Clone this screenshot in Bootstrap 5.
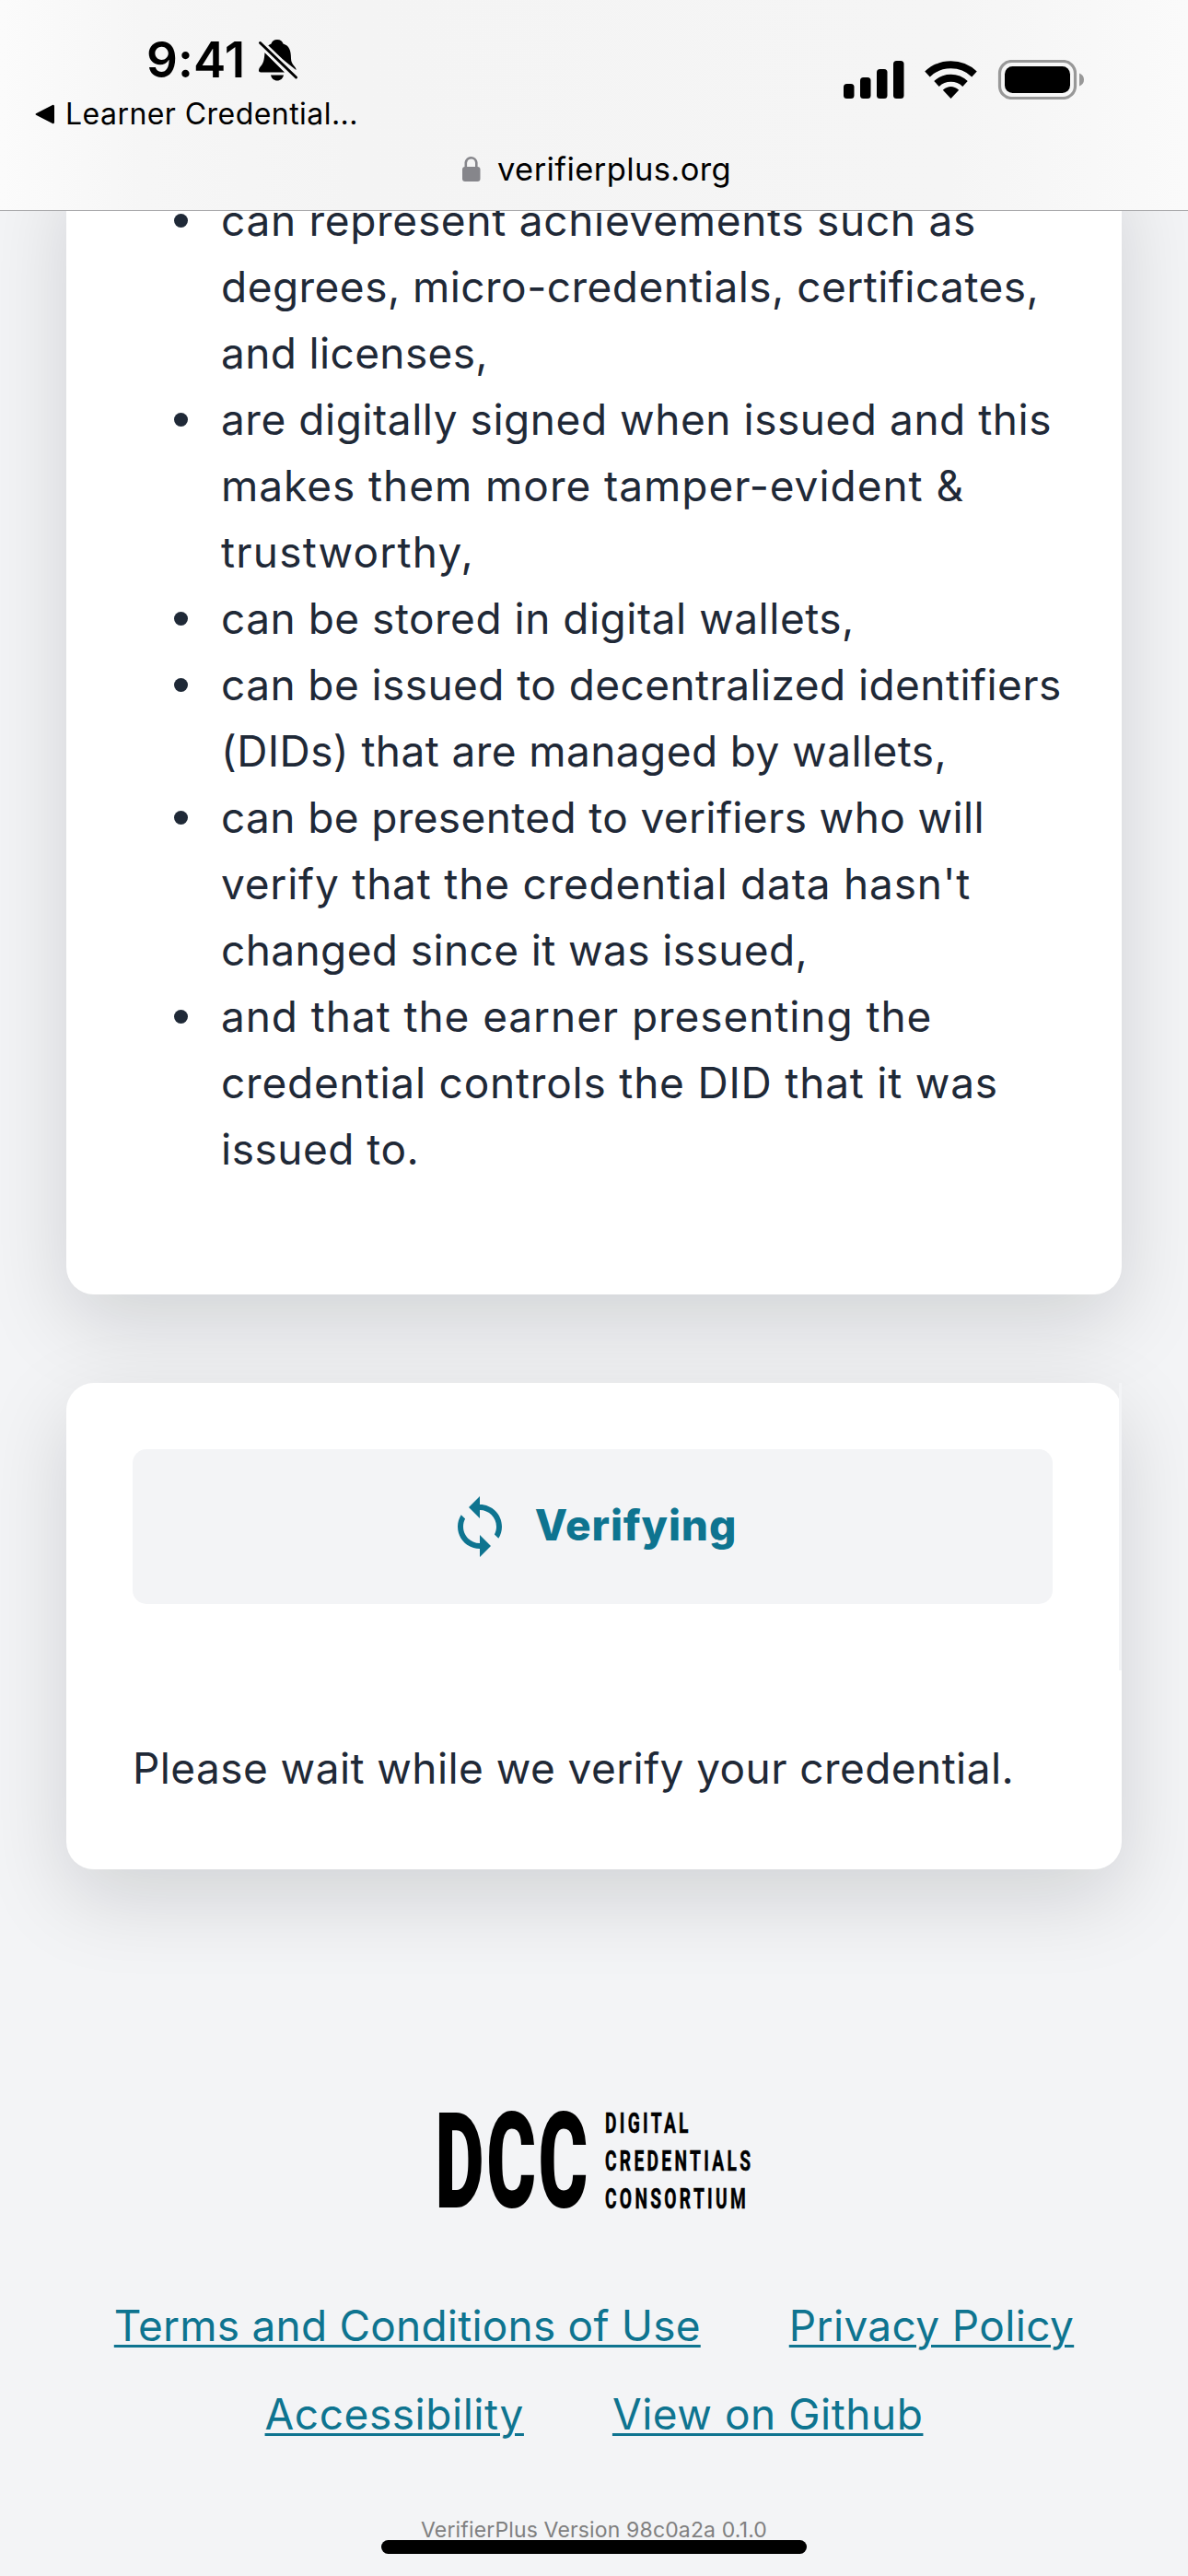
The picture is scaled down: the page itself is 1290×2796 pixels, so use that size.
<!DOCTYPE html>
<html lang="en">
<head>
<meta charset="utf-8">
<meta name="viewport" content="width=device-width, initial-scale=1">
<title>VerifierPlus</title>
<link href="https://cdn.jsdelivr.net/npm/bootstrap@5.3.0/dist/css/bootstrap.min.css" rel="stylesheet">
<style>
html,body{height:2796px;overflow:hidden}
body{background:#f3f4f6;color:#1f2937;font-family:Inter,sans-serif;font-size:46px;line-height:72px;width:1290px}
svg{display:block;flex:none}
.phone-top{height:229px;padding-top:35px;border-bottom:1.5px solid #a9a9ab;background:linear-gradient(90deg,#fbfbfb 0,#f6f6f6 12%,#f4f4f4 30%,#f5f5f5 80%,#fafafa 100%);font-family:Inter,sans-serif;color:#000;z-index:2}
.clock-row{height:60px;padding-left:159px;line-height:60px;font-size:53px;font-weight:600}
.clock-text{width:107px;letter-spacing:.1px}
.back-row{height:40px;margin-top:9px;padding-left:38px;font-size:32px;line-height:40px;letter-spacing:.45px}
.back-row svg{margin-right:11px}
.status-icons{padding:30px 113px 0 0}
.url-row{margin-top:18px;height:44px;line-height:44px;font-size:34.5px;letter-spacing:.4px;padding-left:502px}
.url-row svg{margin-top:-1px}
.page-area{height:2567px;overflow:hidden}
.panel{width:1146px;margin:0 auto;background:#fff;border-radius:30px;box-shadow:0 30px 90px rgba(8,12,24,.145)}
.panel-facts{margin-top:-60px;height:1236px;padding:33.5px 0 0 117px}
.fact{white-space:nowrap}
.dot{width:15px;height:15px;border-radius:50%;background:#1f2937;flex:none;margin:29.5px 36px 0 0}
.fact span{display:block;letter-spacing:var(--track)}
.panel-status{margin-top:96px;height:528px;padding:72px}
.panel-status::after{content:"";position:absolute;top:0;right:0;width:3px;height:312px;background:#f3f4f6}
.verify-box{width:999px;height:168px;border-radius:15px;background:#f3f4f6;color:#0e7490;font:800 46px/72px Inter,sans-serif;letter-spacing:.9px;gap:24px;padding-right:2px}
.verify-box span{padding-bottom:4px}
.wait-text{margin:141.5px 0 0;letter-spacing:.42px;white-space:nowrap}
.dcc-logo{margin:254px 0 0 470px;overflow:visible}
.footer-links{margin-top:85px;gap:24px 96px}
.footer-links a{color:#0e7490;text-decoration:underline;text-decoration-thickness:3px;text-underline-offset:4px;white-space:nowrap;margin-top:-1px;margin-bottom:1px}
.version{color:#808080;font-size:23px;line-height:36px;letter-spacing:.15px;margin-top:71px}
.home-bar{left:414px;top:2757px;width:462px;height:15px;border-radius:8px;background:#000;z-index:3}
</style>
<script src="https://cdn.jsdelivr.net/npm/bootstrap@5.3.0/dist/js/bootstrap.bundle.min.js"></script>
</head>
<body class="position-relative m-0">
<header class="phone-top position-relative">
  <div class="d-flex justify-content-between">
    <div>
      <div class="clock-row d-flex">
        <div class="clock-text">9:41</div>
        <svg width="58" height="60" viewBox="266 35 58 60">
          <path d="M301 43c-3.5 0-5.800 2-6.500 4.500-2 .8-3.700 1.900-5 3.300L321.500 76c.8-3-5.500-5.500-5.500-12.500 0-9-2-14-8.500-16-.7-2.500-3-4.500-6.500-4.500z"/>
          <path d="M287.500 57c-.6 8-1.300 11.500-4.500 15-1.600 1.800-2 3.500-2 4.500 0 1.300.8 2 2.200 2H309z"/>
          <path d="M294 81.500h14c-.8 3.700-3.500 6-7 6s-6.200-2.300-7-6z"/>
          <path d="M282.500 46.500 321.500 84" stroke="#f5f5f5" stroke-width="8"/>
          <path d="M282.500 46.500 321.500 84" stroke="#000" stroke-width="3" stroke-linecap="round"/>
        </svg>
      </div>
      <div class="back-row d-flex align-items-center">
        <svg width="22" height="24" viewBox="0 0 22 24"><path d="M1.500 11 19 2q2-.8 2 1.500v17q0 2.300-2 1.500L1.500 13q-2-1 0-2z"/></svg>
        <div>Learner Credential...</div>
      </div>
    </div>
    <div class="status-icons">
      <svg width="261" height="43" viewBox="916 65 261 43">
        <rect x="916" y="91" width="11.500" height="16" rx="3.500"/><rect x="934" y="84" width="11.500" height="23" rx="3.500"/><rect x="952" y="75" width="11.500" height="32" rx="3.500"/><rect x="970" y="66" width="11.500" height="41" rx="3.500"/>
        <g fill="none" stroke="#000" stroke-width="8"><path d="M1007 80.500a37 37 0 0 1 51 0"/><path d="M1017 91a22.500 22.500 0 0 1 31 0"/></g>
        <path d="M1032.500 107l-8.700-9.200q8.700-7.500 17.400 0z"/>
        <rect x="1085.500" y="66.500" width="82" height="40" rx="13" fill="none" stroke="#989898" stroke-width="3.200"/>
        <rect x="1091" y="72" width="71" height="29" rx="8.500"/>
        <path d="M1172 79.500q5 2 5 7t-5 7z" fill="#989898"/>
      </svg>
    </div>
  </div>
  <div class="url-row d-flex">
    <svg width="38" height="44" viewBox="502 161 38 44"><path d="M505.800 182v-5.500a5.800 6 0 0 1 11.500 0v5.500" fill="none" stroke="#86868b" stroke-width="2.600"/><rect x="502" y="181" width="19.500" height="16" rx="3" fill="#86868b"/></svg>
    <div>verifierplus.org</div>
  </div>
</header>
<main class="page-area">
  <section class="panel panel-facts">
    <ul class="list-unstyled m-0">
      <li class="fact d-flex"><i class="dot"></i><div><span style="--track:.7px">can represent achievements such as</span><span style="--track:.46px">degrees, micro-credentials, certificates,</span><span style="--track:.36px">and licenses,</span></div></li>
      <li class="fact d-flex"><i class="dot"></i><div><span style="--track:.53px">are digitally signed when issued and this</span><span style="--track:.95px">makes them more tamper-evident &amp;</span><span style="--track:1.2px">trustworthy,</span></div></li>
      <li class="fact d-flex"><i class="dot"></i><div><span style="--track:.5px">can be stored in digital wallets,</span></div></li>
      <li class="fact d-flex"><i class="dot"></i><div><span style="--track:.42px">can be issued to decentralized identifiers</span><span style="--track:.41px">(DIDs) that are managed by wallets,</span></div></li>
      <li class="fact d-flex"><i class="dot"></i><div><span style="--track:.37px">can be presented to verifiers who will</span><span style="--track:.79px">verify that the credential data hasn't</span><span style="--track:.39px">changed since it was issued,</span></div></li>
      <li class="fact d-flex"><i class="dot"></i><div><span style="--track:.92px">and that the earner presenting the</span><span style="--track:.79px">credential controls the DID that it was</span><span style="--track:.5px">issued to.</span></div></li>
    </ul>
  </section>
  <section class="panel panel-status position-relative">
    <div class="verify-box d-flex align-items-center justify-content-center">
      <svg width="72" height="72" viewBox="0 0 24 24" fill="currentColor"><path d="M12 4V1L8 5l4 4V6c3.310 0 6 2.690 6 6 0 1.010-.25 1.970-.7 2.800l1.460 1.460C19.540 15.030 20 13.570 20 12c0-4.420-3.580-8-8-8zm0 14c-3.310 0-6-2.690-6-6 0-1.010.25-1.970.7-2.800L5.240 7.740C4.460 8.970 4 10.430 4 12c0 4.420 3.580 8 8 8v3l4-4-4-4v3z"/></svg>
      <span>Verifying</span>
    </div>
    <p class="wait-text">Please wait while we verify your credential.</p>
  </section>
  <footer>
    <svg class="dcc-logo" width="350" height="121" viewBox="470 2284 350 121" font-family="Roboto,sans-serif" font-weight="900">
      <g transform="translate(472.500 2397) scale(.57 1)"><text font-size="144" letter-spacing="4.500">DCC</text></g>
      <g font-size="32" font-weight="700" letter-spacing="5.500" stroke="#000" stroke-width=".6">
        <g transform="translate(657 2316) scale(.6 1)"><text>DIGITAL</text></g>
        <g transform="translate(657 2357) scale(.6 1)"><text>CREDENTIALS</text></g>
        <g transform="translate(657 2397.500) scale(.6 1)"><text>CONSORTIUM</text></g>
      </g>
    </svg>
    <nav class="footer-links d-flex flex-wrap justify-content-center">
      <a href="#" style="letter-spacing:.21px">Terms and Conditions of Use</a>
      <a href="#" style="letter-spacing:.36px">Privacy Policy</a>
      <a href="#" style="letter-spacing:.55px">Accessibility</a>
      <a href="#" style="letter-spacing:.52px">View on Github</a>
    </nav>
    <div class="version text-center">VerifierPlus Version 98c0a2a 0.1.0</div>
  </footer>
</main>
<div class="home-bar position-absolute"></div>
</body>
</html>
